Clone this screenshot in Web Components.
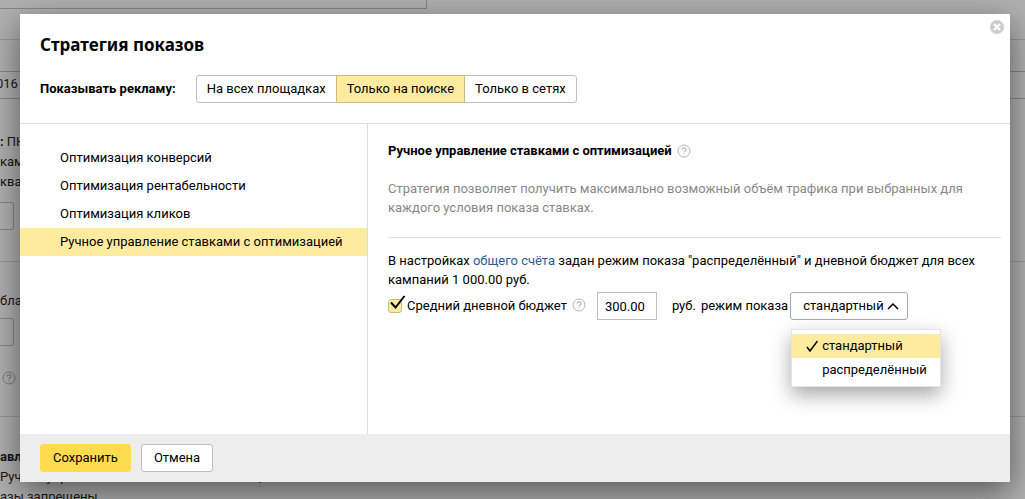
<!DOCTYPE html>
<html lang="ru">
<head>
<meta charset="utf-8">
<meta name="viewport" content="width=device-width, initial-scale=1">
<title>Стратегия показов</title>
<style>
  body {
    margin: 0;
    height: 100vh;
    overflow: hidden;
    background: #b0b0b0;
    color: #000;
    font: 13px/20px Roboto, "Noto Sans", sans-serif;
  }
</style>
</head>
<body>
<strategy-page></strategy-page>

<script>
const controls = `
  * { box-sizing: border-box; }
  button, input, select {
    font: inherit;
    color: inherit;
    margin: 0;
    height: 28px;
    border: 1px solid #bfbfbf;
    border-radius: 3px;
    background: #fff;
  }
  button { cursor: pointer; }
`;

function define(name, html) {
  const template = document.createElement('template');
  template.innerHTML = html;

  customElements.define(name, class extends HTMLElement {
    constructor() {
      super();
      this.attachShadow({ mode: 'open' }).appendChild(template.content.cloneNode(true));
    }
  });
}

define('help-icon', `
  <style>
    :host { display: inline-block; width: 14px; height: 14px; color: #b4b4b4; }
    svg { display: block; }
  </style>
  <svg width="14" height="14" viewBox="0 0 14 14" fill="none" stroke="currentColor" role="img" aria-label="Справка">
    <circle cx="7" cy="7" r="6"/>
    <path d="M5 5.6C5 3.4 9 3.3 9 5.5C9 7 7 6.8 7 8.5M7 9.4V10.6" stroke-width="1.1"/>
  </svg>
`);

// campaign form that stays under the dialog
define('campaign-form', `
  <style>
    ${controls}
    :host { display: block; height: 100%; overflow: hidden; color: #161616; white-space: nowrap; }
    .name { width: 427px; height: 9px; border: solid #868686; border-width: 0 1px 1px 0; }
    .line { height: 1px; margin: 0; border: 0; background: #989898; }
    .date { height: 28px; margin-top: 31px; border: solid #868686; border-width: 1px 0; line-height: 24px; }
    .date { text-indent: -4px; }
    .days { margin-top: 33px; }
    .days b { margin-right: 3px; }
    button { display: block; width: 14px; padding: 0; border-color: #868686; border-left: 0; border-radius: 0 3px 3px 0; background: none; color: #315f8e; }
    help-icon { display: block; margin: 25px 0 0 2px; color: #777; }
    p { margin: 0; }
  </style>
  <div class="name"></div>
  <hr class="line" style="margin-top: 30px">
  <div class="date">016</div>
  <p class="days"><b>:</b>ПН</p>
  <p>кам</p>
  <p>ква</p>
  <button type="button" style="margin-top: 10px" aria-label="Изменить"></button>
  <hr class="line" style="margin-top: 31px">
  <p style="margin-top: 29px">блас</p>
  <button type="button" style="margin-top: 7px" aria-label="Изменить"></button>
  <help-icon></help-icon>
  <hr class="line" style="margin-top: 31px">
  <p style="margin-top: 30px"><b>авление</b></p>
  <p>Ручное управление ставками с оптимизацией</p>
  <p>азы запрещены</p>
`);

define('modal-dialog', `
  <style>
    ${controls}
    :host {
      display: flex;
      flex-direction: column;
      position: relative;
      background: #fff;
      box-shadow: 0 10px 30px rgba(0, 0, 0, .5);
    }
    header { padding: 19px 20px 20px; border-bottom: 1px solid #ddd; }
    h1 { margin: 0 0 18px; font: bold 17px/24px "Noto Sans", sans-serif; }
    .body { flex: 1; display: flex; }
    footer { display: flex; gap: 10px; padding: 10px 20px; background: #ededed; }
    .close { position: absolute; top: 6px; right: 6px; width: 14px; height: 14px; padding: 0; border: 0; background: none; }
    .close svg { display: block; }
  </style>
  <header>
    <h1><slot name="title"></slot></h1>
    <slot name="toolbar"></slot>
  </header>
  <div class="body"><slot></slot></div>
  <footer><slot name="actions"></slot></footer>
  <button class="close" type="button" aria-label="Закрыть">
    <svg width="14" height="14" viewBox="0 0 14 14">
      <circle cx="7" cy="7" r="7" fill="#ccc"/>
      <path d="M4 4l6 6M10 4l-6 6" stroke="#fff" stroke-width="2.2"/>
    </svg>
  </button>
`);

define('platform-switch', `
  <style>
    ${controls}
    :host { display: flex; align-items: center; gap: 20px; }
    .group { display: flex; }
    button { padding: 0 10px; border-radius: 0; }
    button + button { margin-left: -1px; }
    button:first-child { border-radius: 3px 0 0 3px; }
    button:last-child { border-radius: 0 3px 3px 0; }
    button[aria-pressed="true"] { position: relative; background: #ffeba0; border-color: #ccbc80; }
  </style>
  <b id="label">Показывать рекламу:</b>
  <div class="group" role="group" aria-labelledby="label">
    <button type="button" aria-pressed="false">На всех площадках</button>
    <button type="button" aria-pressed="true">Только на поиске</button>
    <button type="button" aria-pressed="false">Только в сетях</button>
  </div>
`);

define('strategy-menu', `
  <style>
    :host { display: block; flex: 0 0 348px; box-sizing: border-box; padding-top: 20px; border-right: 1px solid #ddd; }
    a { display: block; padding: 0 20px 0 40px; line-height: 28px; color: inherit; text-decoration: none; }
    a[aria-current] { background: #ffeba0; }
  </style>
  <nav>
    <a href="#conversions">Оптимизация конверсий</a>
    <a href="#profit">Оптимизация рентабельности</a>
    <a href="#clicks">Оптимизация кликов</a>
    <a href="#manual" aria-current="true">Ручное управление ставками с оптимизацией</a>
  </nav>
`);

define('mode-select', `
  <style>
    ${controls}
    :host { display: block; position: relative; }
    .field { display: grid; align-items: center; }
    select, .arrow { grid-area: 1 / 1; }
    select { appearance: none; width: 118px; padding: 0 20px 0 12px; border-color: #aaa; }
    .arrow { justify-self: end; margin-right: 9px; pointer-events: none; }
    ul {
      position: absolute;
      top: 37px;
      left: 1px;
      width: 150px;
      margin: 0;
      padding: 4px 0;
      list-style: none;
      background: #fff;
      border: 1px solid #e4e4e4;
      box-shadow: 0 8px 20px rgba(0, 0, 0, .35);
      line-height: 24px;
    }
    li { display: flex; align-items: center; padding-left: 30px; }
    li[aria-selected="true"] { padding-left: 14px; gap: 4px; background: #ffeba0; }
  </style>
  <div class="field">
    <select aria-label="режим показа">
      <option>стандартный</option>
      <option>распределённый</option>
    </select>
    <svg class="arrow" width="12" height="8" viewBox="0 0 12 8" fill="none" stroke="#000" stroke-width="1.5"><path d="M1 7l5-5 5 5"/></svg>
  </div>
  <ul role="listbox" aria-label="режим показа">
    <li role="option" aria-selected="true">
      <svg width="12" height="12" viewBox="0 0 12 12" fill="none" stroke="#000" stroke-width="1.5"><path d="M1 7l3 4L11.500 1"/></svg>
      стандартный
    </li>
    <li role="option" aria-selected="false">распределённый</li>
  </ul>
`);

define('strategy-settings', `
  <style>
    ${controls}
    :host { display: block; flex: 1; min-width: 0; padding: 17px 9px 0 20px; }
    h2 { display: flex; align-items: center; gap: 5px; margin: 0 0 18px; font-size: 13px; line-height: 20px; }
    p { margin: 0; padding-right: 20px; line-height: 19px; }
    .about { color: #888; }
    hr { height: 1px; margin: 20px 0 13px; border: 0; background: #ddd; }
    a { color: #2f5a93; text-decoration: none; }
    .budget { display: flex; align-items: center; margin-top: 3px; white-space: nowrap; }
    .check { display: flex; align-items: center; gap: 4px; }
    .box { display: grid; width: 15px; }
    .box input, .box svg { grid-area: 1 / 1; }
    .box input { appearance: none; width: 14px; height: 14px; background: #ffeba0; border-color: #ccbc80; }
    .box svg { z-index: 1; margin-top: -4px; pointer-events: none; overflow: visible; }
    .budget help-icon { margin: -2px 11px 0 5px; }
    .sum { width: 60px; padding: 0 7px; border-radius: 0; }
    .unit { margin: 0 5px 0 15px; }
    mode-select { margin-left: 2px; }
  </style>
  <h2>Ручное управление ставками с оптимизацией <help-icon></help-icon></h2>
  <p class="about">Стратегия позволяет получить максимально возможный объём трафика при выбранных для каждого условия показа ставках.</p>
  <hr>
  <p>В настройках <a href="#account">общего счёта</a> задан режим показа "распределённый" и дневной бюджет для всех кампаний 1 000.00 руб.</p>
  <div class="budget">
    <label class="check">
      <span class="box">
        <input type="checkbox" checked>
        <svg width="17" height="15" viewBox="0 0 17 15" fill="none" stroke="#000" stroke-width="2"><path d="M3 7.500l4.500 5L16.500 1"/></svg>
      </span>
      Средний дневной бюджет
    </label>
    <help-icon></help-icon>
    <input class="sum" type="text" value="300.00" aria-label="Средний дневной бюджет, руб.">
    <span class="unit">руб.</span>
    <span>режим показа</span>
    <mode-select></mode-select>
  </div>
`);

define('action-button', `
  <style>
    ${controls}
    :host { display: block; }
    button { padding: 0 12px; }
    :host([primary]) button { background: #ffdb4d; border-color: #ffdb4d; }
  </style>
  <button type="button"><slot></slot></button>
`);

define('strategy-page', `
  <style>
    :host { display: grid; height: 100%; overflow: hidden; }
    campaign-form, modal-dialog { grid-area: 1 / 1; min-width: 0; min-height: 0; }
    modal-dialog { margin: 14px 15px 17px 20px; }
  </style>
  <campaign-form></campaign-form>
  <modal-dialog role="dialog" aria-label="Стратегия показов">
    <span slot="title">Стратегия показов</span>
    <platform-switch slot="toolbar"></platform-switch>
    <strategy-menu></strategy-menu>
    <strategy-settings></strategy-settings>
    <action-button slot="actions" primary>Сохранить</action-button>
    <action-button slot="actions">Отмена</action-button>
  </modal-dialog>
`);
</script>
</body>
</html>
